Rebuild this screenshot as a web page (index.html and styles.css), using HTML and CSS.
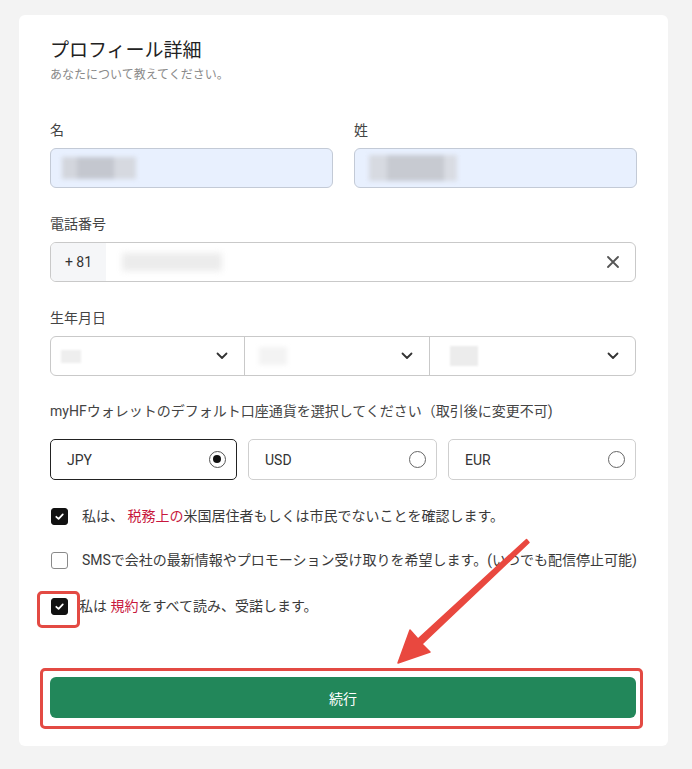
FILE: index.html
```html
<!DOCTYPE html>
<html lang="ja">
<head>
<meta charset="utf-8">
<link rel="stylesheet" href="styles.css">
</head>
<body>
<div class="page">
  <div class="card">
    <h1 class="title">プロフィール詳細</h1>
    <p class="subtitle">あなたについて教えてください。</p>

    <div class="row-2">
      <div class="field">
        <label class="label">名</label>
        <div class="input autofill"><span class="blur blur-a"></span></div>
      </div>
      <div class="field">
        <label class="label">姓</label>
        <div class="input autofill"><span class="blur blur-b"></span></div>
      </div>
    </div>

    <div class="field gap-top">
      <label class="label">電話番号</label>
      <div class="input phone">
        <span class="prefix">+ 81</span>
        <span class="blur blur-phone"></span>
        <svg class="clear" viewBox="0 0 12 12" width="12" height="12"><path d="M1 1L11 11M11 1L1 11" stroke="#555" stroke-width="1.8" stroke-linecap="round"/></svg>
      </div>
    </div>

    <div class="field gap-top">
      <label class="label">生年月日</label>
      <div class="selects">
        <div class="select s1"><span class="blur blur-s1"></span><svg class="chev" viewBox="0 0 12 8" width="12" height="8"><path d="M1.5 1.5L6 6L10.5 1.5" fill="none" stroke="#333" stroke-width="1.8" stroke-linecap="round" stroke-linejoin="round"/></svg></div>
        <div class="select s2"><span class="blur blur-s2"></span><svg class="chev" viewBox="0 0 12 8" width="12" height="8"><path d="M1.5 1.5L6 6L10.5 1.5" fill="none" stroke="#333" stroke-width="1.8" stroke-linecap="round" stroke-linejoin="round"/></svg></div>
        <div class="select s3"><span class="blur blur-s3"></span><svg class="chev" viewBox="0 0 12 8" width="12" height="8"><path d="M1.5 1.5L6 6L10.5 1.5" fill="none" stroke="#333" stroke-width="1.8" stroke-linecap="round" stroke-linejoin="round"/></svg></div>
      </div>
    </div>

    <div class="field gap-cur">
      <label class="label label-cur">myHFウォレットのデフォルト口座通貨を選択してください（取引後に変更不可)</label>
      <div class="radios">
        <div class="radio selected"><span>JPY</span><span class="dot on"></span></div>
        <div class="radio"><span>USD</span><span class="dot"></span></div>
        <div class="radio"><span>EUR</span><span class="dot"></span></div>
      </div>
    </div>

    <div class="check-row c1">
      <span class="box checked"><svg viewBox="0 0 12 12" width="11" height="11"><path d="M2.5 6.3L5 8.6L9.6 3.6" fill="none" stroke="#fff" stroke-width="1.9" stroke-linecap="round" stroke-linejoin="round"/></svg></span>
      <span class="ctext">私は、 <span class="link">税務上の</span>米国居住者もしくは市民でないことを確認します。</span>
    </div>
    <div class="check-row c2">
      <span class="box"></span>
      <span class="ctext">SMSで会社の最新情報やプロモーション受け取りを希望します。(いつでも配信停止可能)</span>
    </div>
    <div class="check-row c3">
      <span class="box checked"><svg viewBox="0 0 12 12" width="11" height="11"><path d="M2.5 6.3L5 8.6L9.6 3.6" fill="none" stroke="#fff" stroke-width="1.9" stroke-linecap="round" stroke-linejoin="round"/></svg><span class="highlight hl-box"></span></span>
      <span class="ctext">私は <span class="link">規約</span>をすべて読み、受諾します。</span>
    </div>

    <div class="btn-wrap">
      <button class="btn">続行</button>
      <span class="highlight hl-btn"></span>
    </div>
  </div>

  <svg class="arrow" viewBox="0 0 692 769" width="692" height="769">
    <polygon points="398,663 430,652 422,644 529,542.5 526.5,539.5 418,639 410,630" fill="#e9483f" stroke="#e9483f" stroke-width="1.5" stroke-linejoin="round"/>
  </svg>
</div>
</body>
</html>
```

FILE: styles.css
```css
* { box-sizing: border-box; }
html, body { margin: 0; padding: 0; }
body {
  background: #f3f3f3;
  font-family: Roboto, "Noto Sans CJK JP", sans-serif;
  color: #2b2b2b;
  width: 692px;
  height: 769px;
  overflow: hidden;
}
.page { position: relative; width: 692px; height: 769px; padding: 15px 0 0 19px; }
.card {
  width: 649px;
  height: 731px;
  background: #fff;
  border-radius: 6px;
  padding: 22px 32px 0 31px;
}
.title {
  margin: 0;
  font-size: 19px;
  line-height: 28px;
  font-weight: 400;
  color: #222;
}
.subtitle {
  margin: 2px 0 0;
  font-size: 12px;
  line-height: 17px;
  color: #8a8a8a;
}
.row-2 { display: grid; grid-template-columns: 283px 283px; column-gap: 21px; margin-top: 36px; }
.field { display: flex; flex-direction: column; }
.gap-top { margin-top: 26px; }
.gap-cur { margin-top: 25px; }
.label { font-size: 14px; line-height: 20px; color: #444; margin-bottom: 8px; }
.label-cur { margin-bottom: 18px; }
.input {
  height: 40px;
  border: 1px solid #c9c9c9;
  border-radius: 6px;
  display: flex;
  align-items: center;
  position: relative;
  overflow: hidden;
}
.autofill { background: #e8f0fe; border-color: #c3cad6; }
.blur { display: block; background: #c9ccd3; filter: blur(2px); }
.blur-a { width: 74px; height: 22px; margin-left: 11px; background: linear-gradient(90deg,#d3d6dd 0 20%,#c4c7cf 20% 70%,#d6d9e0 70%); }
.blur-b { width: 88px; height: 26px; margin-left: 14px; background: linear-gradient(90deg,#d7dae1 0 20%,#c7cad1 20% 85%,#d9dce3 85%); }
.phone { padding-right: 16px; }
.prefix {
  width: 55px;
  height: 100%;
  background: #f5f6f8;
  display: flex;
  align-items: center;
  justify-content: center;
  font-size: 14px;
  color: #333;
}
.blur-phone { width: 100px; height: 18px; margin-left: 16px; background: #ececec; filter: blur(3px); }
.clear { margin-left: auto; }
.selects {
  display: grid;
  grid-template-columns: 193px 185px 1fr;
  height: 40px;
  border: 1px solid #c9c9c9;
  border-radius: 6px;
}
.select { display: flex; align-items: center; padding: 0 16px 0 10px; }
.select + .select { border-left: 1px solid #c9c9c9; }
.chev { margin-left: auto; }
.blur-s1 { width: 20px; height: 13px; background: #eeeeee; filter: blur(1px); }
.blur-s2 { width: 28px; height: 18px; background: #f3f3f3; filter: blur(2px); margin-left: 4px; }
.blur-s3 { width: 28px; height: 20px; background: #ececec; filter: blur(1px); margin-left: 10px; }
.radios { display: grid; grid-template-columns: 187px 189px 188px; column-gap: 11px; }
.radio {
  height: 41px;
  border: 1px solid #cfcfcf;
  border-radius: 5px;
  display: flex;
  align-items: center;
  justify-content: space-between;
  padding: 0 10px 0 16px;
  font-size: 14px;
  color: #333;
}
.radio.selected { border-color: #222; }
.dot {
  width: 17px;
  height: 17px;
  border: 1.5px solid #666;
  border-radius: 50%;
  position: relative;
}
.dot.on { border-color: #555; }
.dot.on::after {
  content: "";
  position: absolute;
  left: 3px; top: 3px;
  width: 8px; height: 8px;
  border-radius: 50%;
  background: #111;
}
.check-row { display: flex; align-items: center; gap: 0; font-size: 14px; line-height: 20px; color: #3a3a3a; }
.ctext { white-space: nowrap; }
.c1 { margin-top: 26px; }
.c2 { margin-top: 24px; }
.c3 { margin-top: 26px; }
.box {
  width: 17px;
  height: 17px;
  border: 1px solid #8a8a8a;
  border-radius: 3px;
  margin-left: 1px;
  margin-right: 14px;
  flex: none;
  display: flex;
  align-items: center;
  justify-content: center;
  position: relative;
}
.box.checked { background: #111; border-color: #111; }
.c3 .box { margin-right: 11px; }
.link { color: #c8173d; }
.highlight {
  position: absolute;
  border: 3px solid #e34a43;
  border-radius: 5px;
  pointer-events: none;
}
.hl-box { left: -15px; top: -8px; width: 43px; height: 37px; }
.btn-wrap { position: relative; margin-top: 61px; }
.btn {
  display: block;
  width: 586px;
  height: 41px;
  border: none;
  border-radius: 6px;
  background: #22875a;
  color: #fff;
  font-family: Roboto, "Noto Sans CJK JP", sans-serif;
  font-size: 14px;
}
.hl-btn { left: -10px; top: -9px; width: 603px; height: 61px; border-radius: 5px; }
.arrow { position: absolute; left: 0; top: 0; pointer-events: none; }
```
